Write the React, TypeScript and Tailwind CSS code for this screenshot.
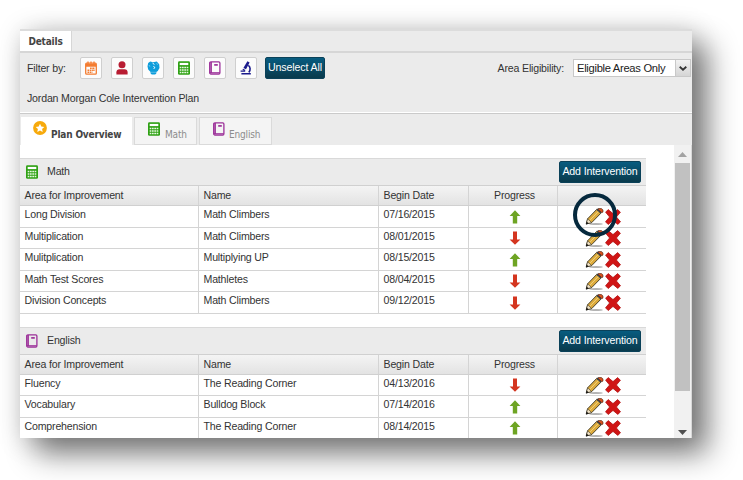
import type { ReactNode } from 'react';

type Row = { area: string; name: string; date: string; up: boolean };

const MATH_ROWS: Row[] = [
  { area: 'Long Division', name: 'Math Climbers', date: '07/16/2015', up: true },
  { area: 'Multiplication', name: 'Math Climbers', date: '08/01/2015', up: false },
  { area: 'Mulitplication', name: 'Multiplying UP', date: '08/15/2015', up: true },
  { area: 'Math Test Scores', name: 'Mathletes', date: '08/04/2015', up: false },
  { area: 'Division Concepts', name: 'Math Climbers', date: '09/12/2015', up: false },
];

const ENGLISH_ROWS: Row[] = [
  { area: 'Fluency', name: 'The Reading Corner', date: '04/13/2016', up: false },
  { area: 'Vocabulary', name: 'Bulldog Block', date: '07/14/2016', up: true },
  { area: 'Comprehension', name: 'The Reading Corner', date: '08/14/2015', up: true },
];

function CalendarIcon() {
  return (
    <svg width="12" height="14" viewBox="0 0 12 14" fill="none" stroke="#f47c30">
      <rect x="0.7" y="2.2" width="10.6" height="11" rx="1" strokeWidth="1.3" />
      <path d="M1 3.5h10M1 5h10" strokeWidth="1.3" />
      <path d="M3 0.5v3M6 0.5v2M9 0.5v3" strokeWidth="1.3" />
      <path d="M5 7.2h5M2.5 9.2h7.5M2.5 11.2h5" strokeWidth="1.4" strokeDasharray="1.7 0.6" />
    </svg>
  );
}

function PersonIcon() {
  return (
    <svg width="12" height="14" viewBox="0 0 12 14" fill="#b81c32">
      <circle cx="6" cy="3.7" r="3.5" />
      <path d="M0.4 13.5v-2.2c0-2 1.3-3 3-3h5.2c1.7 0 3 1 3 3v2.2z" />
    </svg>
  );
}

function GlobeIcon() {
  return (
    <svg width="13" height="14" viewBox="0 0 13 14">
      <path
        d="M3.2 0.6 6 1.2 9.8 0.5 12.2 3.2 12.5 7 10.8 10 9.3 11v1.4l-1.2 1.2H4.8l-1.2-1.2V11L1.2 8.6 0.5 5.2 1.2 2z"
        fill="#0d9ddb"
      />
      <path d="M5.6 2.2 7.4 3.4M6.4 5.4l1.4.9-1 1.6" stroke="#fff" strokeWidth="1" fill="none" />
      <path d="M1.8 4.6l1.4.6M9.8 2.4l.6 1.2" stroke="#a8dcf2" strokeWidth="0.8" fill="none" />
      <path d="M3.4 11.3h6" stroke="#7cc9ea" strokeWidth="0.7" />
    </svg>
  );
}

function CalculatorIcon() {
  return (
    <svg width="12" height="14" viewBox="0 0 12 14">
      <rect x="0" y="0.2" width="12" height="13.6" rx="1.4" fill="#2fa114" />
      <rect x="1.7" y="1.9" width="8.6" height="2.2" fill="#fff" />
      <path d="M1.7 6.5h8.6M1.7 9h8.6M1.7 11.5h8.6" stroke="#e6f8e0" strokeWidth="1.5" strokeDasharray="1.7 0.6" />
    </svg>
  );
}

function BookIcon() {
  return (
    <svg width="12" height="14" viewBox="0 0 12 14" fill="none" stroke="#9c3099">
      <rect x="0.7" y="0.8" width="10.2" height="12.2" rx="1.2" strokeWidth="1.3" />
      <path d="M2.1 1v11" strokeWidth="1.6" />
      <path d="M0.8 11.6h10" strokeWidth="0.9" />
      <path d="M5.2 3.9h3.6" strokeWidth="1.7" />
    </svg>
  );
}

function MicroscopeIcon() {
  return (
    <svg width="12" height="14" viewBox="0 0 12 14" fill="#1a1a8c">
      <path d="M7.4 0.3 9.6 1.6 6 8.3 3.4 7z" />
      <path d="M3 7.8 5.4 9l-.7 1-2.2-1z" />
      <path d="M8.3 4.4c2 1.2 2.6 4.8.5 7" fill="none" stroke="#1a1a8c" strokeWidth="1.6" />
      <path d="M0.6 9.4h4.6v1.3H0.6zM1.4 12h9.4v1.6H1.4z" />
    </svg>
  );
}

function StarIcon() {
  return (
    <svg width="14" height="14" viewBox="0 0 14 14">
      <circle cx="7" cy="7" r="6.9" fill="#f7aa0c" />
      <path d="M7 2.8 8.3 5.5l3 .4-2.2 2.1.6 3L7 9.6 4.3 11l.6-3-2.2-2.1 3-.4z" fill="#fff" />
    </svg>
  );
}

function Arrow({ up }: { up: boolean }) {
  return (
    <svg width="12" height="14" viewBox="0 0 12 14">
      {up ? (
        <path d="M6 0.2 11.4 6H8.2v7.6H3.8V6H0.6z" fill="#6ea423" />
      ) : (
        <path d="M6 13.8 11.4 8.5H8V0.4H4v8.1H0.6z" fill="#d4351f" />
      )}
    </svg>
  );
}

function PencilIcon() {
  return (
    <svg width="19" height="18" viewBox="0 0 19 18">
      <ellipse cx="11" cy="16" rx="6.8" ry="1.1" fill="#b4b4b4" />
      <path d="M1.3 15.9 2.6 10.8 11.7 1.4 15.9 5.2 6.7 14.6z" fill="#dcaa3c" stroke="#3a3420" strokeWidth="0.9" />
      <path d="M4.5 12.6 13.6 3.2" stroke="#f1d27a" strokeWidth="1" />
      <path d="M1.3 15.9 2.6 10.8 6.7 14.6z" fill="#f3e4c8" stroke="#3a3420" strokeWidth="0.6" />
      <path d="M0.9 16.4 1.6 13.6 3.8 15.5z" fill="#161616" />
      <path d="M11.3 1.8 12.8 0.5 16.9 4 15.7 5.4z" fill="#3a4148" />
      <path d="M13.2 0.5h3.2L18 1.9v2.2l-1.2.6-3.8-3.4z" fill="#d4511f" stroke="#4a2413" strokeWidth="0.6" />
    </svg>
  );
}

function DeleteIcon() {
  return (
    <svg width="16" height="16" viewBox="0 0 16 16">
      <path
        d="M3.2 0.6 8 4.6 12.6 0.6 15.4 3.2 11.4 8 15.5 12.8 12.8 15.4 8 11.4 3.2 15.5 0.5 12.8 4.6 8 0.6 3.2z"
        fill="#d01515"
        stroke="#b41414"
        strokeWidth="0.8"
        strokeLinejoin="round"
      />
    </svg>
  );
}

function Button({ className, children }: { className: string; children: ReactNode }) {
  return (
    <button
      className={`flex h-[22px] items-center justify-center whitespace-nowrap rounded-[2px] border border-[#0a4159] bg-linear-to-b from-[#075c80] to-[#093a4c] tracking-[-0.12px] text-white ${className}`}
    >
      {children}
    </button>
  );
}

const CELL = 'h-full border-r border-[#d4d4d4] pl-[4.5px]';

function Section({ icon, title, rows }: { icon: ReactNode; title: string; rows: Row[] }) {
  return (
    <section className="w-[626px]">
      <div className="flex h-[27px] items-center border-t border-[#d9d9d9] bg-[#ebebeb] pr-[5px] pl-[6px]">
        {icon}
        <span className="ml-[9px]">{title}</span>
        <Button className="ml-auto w-[82px] text-[10.6px]">Add Intervention</Button>
      </div>
      <div className="grid h-[21px] grid-cols-[179px_180px_90px_89px_88px] border-y border-[#d0d0d0] bg-linear-to-b from-[#f4f4f4] to-[#e3e3e3] leading-[19px]">
        <div className={CELL}>Area for Improvement</div>
        <div className={CELL}>Name</div>
        <div className={CELL}>Begin Date</div>
        <div className="border-r border-[#d4d4d4] pl-[3px] text-center">Progress</div>
        <div />
      </div>
      {rows.map((row) => (
        <div
          key={row.area}
          className="grid h-[21.5px] grid-cols-[179px_180px_90px_89px_88px] border-b border-[#d4d4d4] leading-[17px]"
        >
          <div className={CELL}>{row.area}</div>
          <div className={CELL}>{row.name}</div>
          <div className={CELL}>{row.date}</div>
          <div className="flex justify-center border-r border-[#d4d4d4] pt-[3.5px] pl-[3px]">
            <Arrow up={row.up} />
          </div>
          <div className="flex pt-[2px] pl-[27px]">
            <PencilIcon />
            <div className="pt-[0.5px] pl-[0.5px]">
              <DeleteIcon />
            </div>
          </div>
        </div>
      ))}
    </section>
  );
}

const FILTERS = [CalendarIcon, PersonIcon, GlobeIcon, CalculatorIcon, BookIcon, MicroscopeIcon];

export default function App() {
  return (
    <div className="relative h-[480px] w-[743px] overflow-hidden bg-white pt-[29px] pl-[20px] font-['Liberation_Sans',Arial,sans-serif] text-[10.6px] tracking-[-0.18px] text-[#333]">
      <div className="flex h-[409px] w-[672px] flex-col overflow-hidden bg-[#ebebeb] shadow-[16px_16px_28px_rgba(0,0,0,0.48),3px_3px_26px_rgba(0,0,0,0.2)]">
        <div className="flex h-[24px] shrink-0 border-t-2 border-b-2 border-t-[#dcdcdc] border-b-[#d6d6d6]">
          <div className="flex w-[52px] items-center justify-center border-r border-[#d6d6d6] bg-white pt-[1px] font-['DejaVu_Sans_Condensed','DejaVu_Sans',sans-serif] text-[10px] font-bold text-[#444]">
            Details
          </div>
        </div>

        <div className="flex h-[30px] shrink-0 items-center pl-[7px]">
          <span className="w-[53px] pt-[1px]">Filter by:</span>
          <div className="flex gap-[9px]">
            {FILTERS.map((Icon, i) => (
              <div
                key={i}
                className="flex h-[22px] w-[22px] items-center justify-center rounded-[2px] border border-[#cfcfcf] bg-[#fcfcfc]"
              >
                <Icon />
              </div>
            ))}
          </div>
          <Button className="ml-[8px] w-[60px]">Unselect All</Button>
          <span className="ml-auto pt-[1px]">Area Eligibility:</span>
          <div className="mr-[1px] ml-[9px] flex h-[18px] w-[118px] shrink-0 items-center border border-[#c8c8c8] bg-white text-[11.2px] tracking-[-0.3px] text-[#222]">
            <span className="flex-1 whitespace-nowrap pl-[3px]">Eligible Areas Only</span>
            <span className="flex h-full w-[15px] items-center justify-center border-l border-[#c8c8c8] bg-linear-to-b from-[#f2f2f2] to-[#d5d5d5]">
              <svg width="8" height="5" viewBox="0 0 8 5">
                <path d="M0.7 0.8 4 3.7 7.3 0.8" fill="none" stroke="#333" strokeWidth="1.8" />
              </svg>
            </span>
          </div>
        </div>

        <div className="flex h-[30px] shrink-0 items-center border-b border-white pt-[2px] pl-[7px]">
          Jordan Morgan Cole Intervention Plan
        </div>

        <div className="flex h-[32px] shrink-0 gap-[2px] border-t border-[#cacaca] pt-[3px] pl-[1px] font-['DejaVu_Sans_Condensed','DejaVu_Sans',sans-serif] text-[10px]">
          <div className="flex w-[111px] bg-white pt-[4px] pl-[12px]">
            <StarIcon />
            <span className="mt-[6px] ml-[4px] whitespace-nowrap font-bold text-[#444]">Plan Overview</span>
          </div>
          <div className="flex w-[63px] border border-[#dadada] bg-[#f4f4f4] pt-[4px] pl-[13px] text-[#8c8c8c]">
            <CalculatorIcon />
            <span className="mt-[5px] ml-[5px]">Math</span>
          </div>
          <div className="flex w-[73px] border border-[#dadada] bg-[#f4f4f4] pt-[4px] pl-[13px] text-[#8c8c8c]">
            <BookIcon />
            <span className="mt-[5px] ml-[4px]">English</span>
          </div>
        </div>

        <div className="flex min-h-0 flex-1 bg-white">
          <div className="flex flex-1 flex-col gap-[13px] overflow-hidden pt-[13px]">
            <Section icon={<CalculatorIcon />} title="Math" rows={MATH_ROWS} />
            <Section icon={<BookIcon />} title="English" rows={ENGLISH_ROWS} />
          </div>
          <div className="flex w-[18px] flex-col items-center border-r border-[#d8d8d8] bg-[#f1f1f1] pt-[7px] pb-[3px]">
            <svg width="9" height="5" viewBox="0 0 9 5">
              <path d="M4.5 0 9 5H0z" fill="#a3a3a3" />
            </svg>
            <div className="mt-[6px] h-[228px] w-[15px] bg-[#c1c1c1]" />
            <svg className="mt-auto" width="9" height="5" viewBox="0 0 9 5">
              <path d="M0 0h9L4.5 5z" fill="#505050" />
            </svg>
          </div>
        </div>
      </div>

      {/* highlight ring around the first edit pencil */}
      <div className="absolute top-[193px] left-[573px] h-[44px] w-[44px] rounded-full border-4 border-[#06293d]" />
    </div>
  );
}
